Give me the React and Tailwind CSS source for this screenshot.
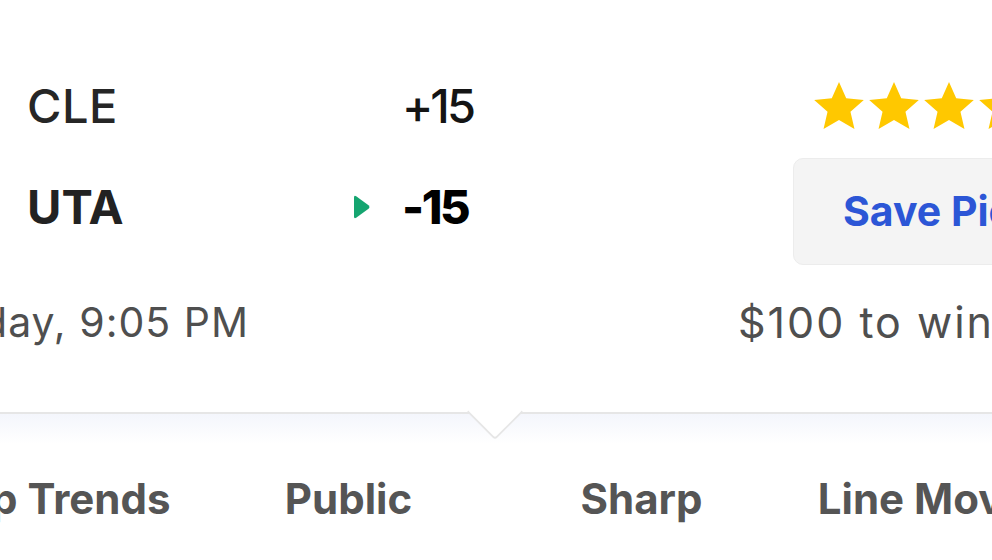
import React from 'react';

const STAR = 'M12 1.8l3.05 6.9 7.45.7-5.65 4.95 1.7 7.35L12 17.85 5.45 21.7l1.7-7.35L1.5 9.4l7.45-.7z';

function Stars({ count = 5 }) {
  return (
    <div className="flex gap-[5px]">
      {Array.from({ length: count }).map((_, i) => (
        <svg key={i} width="50" height="47" viewBox="1.5 1.8 21 19.9" className="shrink-0">
          <path d={STAR} fill="#ffc800" />
        </svg>
      ))}
    </div>
  );
}

function PickArrow() {
  return (
    <svg width="19" height="26" viewBox="0 0 19 26">
      <path d="M2 3.5 Q2 1 4.2 2.3 L16.5 11.2 Q18.4 13 16.5 14.8 L4.2 23.7 Q2 25 2 22.5 Z" fill="#15a570" />
    </svg>
  );
}

const tabs = ['Top Trends', 'Public', 'Sharp', 'Line Moves'];

export default function App() {
  return (
    <div className="w-[992px] h-[560px] overflow-hidden bg-white font-['Inter',sans-serif]">
      {/* matchup */}
      <div className="pt-[80px] pl-[27px]">
        <div className="flex items-center h-[50px]">
          <div className="w-[375px] shrink-0 text-[47px] font-medium text-[#262626] leading-none tracking-[0.5px]">CLE</div>
          <div className="w-[391px] shrink-0 text-[47px] font-medium text-[#141414] leading-none tracking-[-3px]">+15</div>
          <div className="pl-[21px] shrink-0">
            <Stars />
          </div>
        </div>
        <div className="flex items-center h-[107px] mt-[28px]">
          <div className="w-[325px] shrink-0 text-[47px] font-bold text-[#222] leading-none -mt-[10px]">UTA</div>
          <div className="w-[50px] shrink-0 -mt-[10px]">
            <PickArrow />
          </div>
          <div className="w-[391px] shrink-0 text-[47px] font-extrabold text-black leading-none tracking-[-2.5px] -mt-[10px]">-15</div>
          <button className="w-[312px] h-[107px] shrink-0 rounded-[10px] bg-[#f4f4f4] border border-[#ececec] pl-[49px] text-left text-[41px] font-bold text-[#2c56d6] whitespace-nowrap">
            Save Pick
          </button>
        </div>
      </div>

      {/* meta */}
      <div className="flex items-center mt-[37px] h-[40px] text-[41px] text-[#4f4f4f] whitespace-nowrap leading-none">
        <div className="w-[249px] flex justify-end shrink-0 tracking-[1px]">
          <span>Today, 9:05 PM</span>
        </div>
        <div className="ml-[489px] shrink-0 text-[43px] tracking-[2px]">$100 to win $191</div>
      </div>

      {/* divider */}
      <div className="relative mt-[70px]">
        <div className="h-[2px] bg-[#e6e6e6]" />
        <div className="h-[30px] bg-gradient-to-b from-[#f4f6fc] to-white" />
        <div className="absolute left-[475px] top-[-20px] w-[40px] h-[40px] rotate-45 bg-white border-r-2 border-b-2 border-[#e6e6e6] rounded-br-[4px]" />
      </div>

      {/* tabs */}
      <div className="flex -ml-[91px] mt-[34px] whitespace-nowrap">
        {tabs.map((t) => (
          <div key={t} className="w-[293px] shrink-0 text-center text-[42px] font-bold text-[#555] leading-none">
            {t}
          </div>
        ))}
      </div>
    </div>
  );
}
